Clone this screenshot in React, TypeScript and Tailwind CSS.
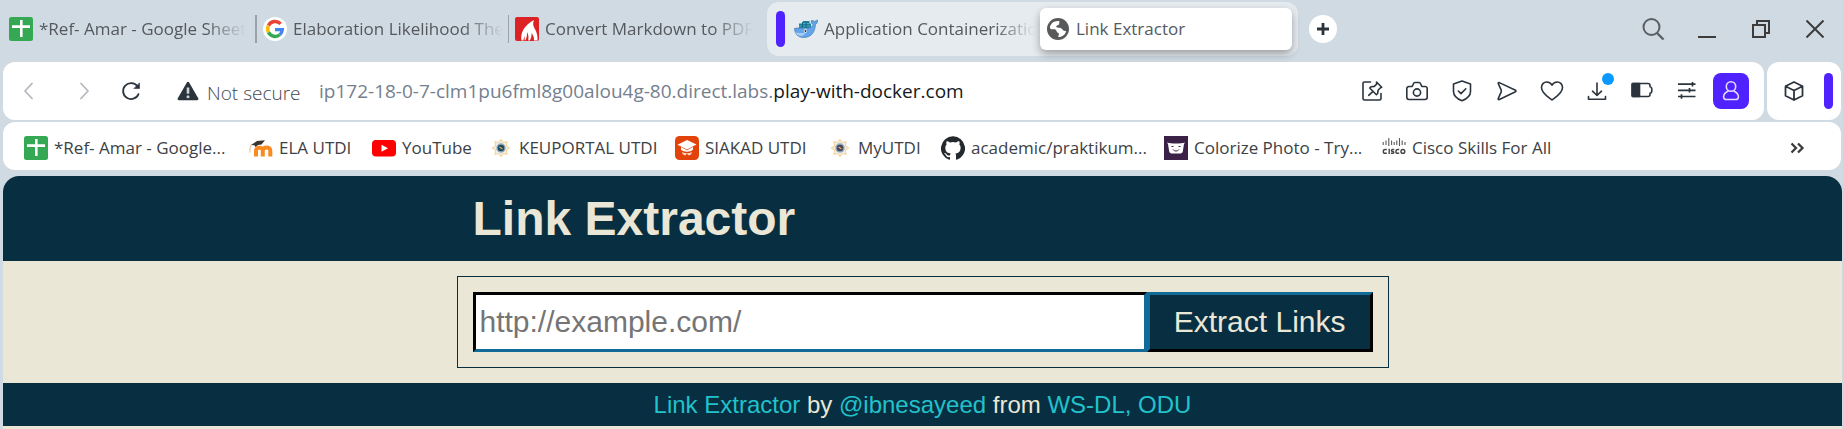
import type { ReactNode } from "react";

function SheetsIcon() {
  return (
    <svg viewBox="0 0 24 24" className="size-6 shrink-0" aria-hidden="true">
      <rect width="24" height="24" rx="2.5" fill="#34a853" />
      <path d="M12.3 3v17M3 9.6h18" stroke="#fff" strokeWidth="2.6" fill="none" />
    </svg>
  );
}

function GoogleIcon() {
  return (
    <svg viewBox="0 0 24 24" className="size-6 shrink-0" aria-hidden="true">
      <circle cx="12" cy="12" r="12" fill="#fff" />
      <g fill="none" strokeWidth="3.4">
        <path d="M17.6 6.9A7.4 7.4 0 0 0 5.5 8.6" stroke="#ea4335" />
        <path d="M5.5 8.6a7.4 7.4 0 0 0 0 6.8" stroke="#fbbc05" />
        <path d="M5.5 15.4a7.4 7.4 0 0 0 11.3 2.3" stroke="#34a853" />
        <path d="M16.8 17.7a7.4 7.4 0 0 0 2.5-5.1H12" stroke="#4285f4" />
      </g>
    </svg>
  );
}

function MarkdownPdfIcon() {
  return (
    <svg viewBox="0 0 24 24" className="size-6 shrink-0" aria-hidden="true">
      <rect width="24" height="24" rx="2" fill="#dd2226" />
      <path
        d="M6.500 23.500C5 16 9.500 8 19 3c-1.500 4-.8 6 1.200 9.500 1.600 3 2.600 6.500 2.300 11h-3.500c.2-3-.6-5-2.600-7.500.4 3-.2 5.200-1.600 7.500h-1.600c.6-3.200.2-6-1.200-8.500.2 3.500-.4 6-1.700 8.500H9.800c-.4-1.600-.3-3 .2-4.600-1 1.400-1.500 2.800-1.600 4.600z"
        fill="#fff"
      />
    </svg>
  );
}

function WhaleIcon() {
  return (
    <svg viewBox="0 0 24 24" className="size-6 shrink-0" aria-hidden="true">
      <path d="M5 11V6.500h3L9 4h6.500v2.500H17V11z" fill="#1f7f9c" />
      <path d="M8 6.500h8M5 9h11.500" stroke="#46b0c8" strokeWidth=".9" />
      <path d="M8.500 5v5M12 5v5" stroke="#0f5a73" strokeWidth=".8" />
      <path
        d="M.5 11.500c4.500-1.300 7.500.6 11 .2 3.500-.4 7-1.500 7.700-4.100-1.300-.7-2-1.800-2-4 1.500-.2 2.600.2 3.400 1.100.6-1 1.700-1.500 3.200-1.500-.1 2-1 3.500-2.400 4.400C21 14.500 18 20.500 9.500 20.500c-5.500 0-8.700-3.500-9-9z"
        fill="#62a5ea"
        stroke="#4178ae"
        strokeWidth=".7"
      />
      <path d="M1.500 15.200c3 1 6 .8 10 .8-1.500 2.200-3 3-4.500 3-2.700-.1-4.600-1.300-5.500-3.800z" fill="#a9cdf2" />
      <circle cx="11.400" cy="14" r="1.700" fill="#fff" />
      <circle cx="11.500" cy="14" r="1" fill="#1c2430" />
    </svg>
  );
}

function GlobeIcon() {
  return (
    <svg viewBox="0 0 22 22" className="size-[22px] shrink-0" aria-hidden="true">
      <circle cx="11" cy="11" r="11" fill="#58595b" />
      <path
        d="M12.500 3.200c-5-.8-9 2.200-9.600 6.300C3.500 12 5.500 11 7.500 11.200c2.500.2 1.500 2.800 3.500 3.500 1.500.6.8 1.800.2 4.200 4 .2 7.200-2.300 7.900-6-1.700.5-3.200-.2-4-1.800-1-1.600-3.200-1-4.900-1.500-1.400-.5-1.200-2 .3-2.300 2.300-.4 1.500-2.300 2-4.100z"
        fill="#fff"
      />
    </svg>
  );
}

function MoodleIcon() {
  return (
    <svg viewBox="0 0 24 24" className="size-6 shrink-0" aria-hidden="true">
      <path
        d="M7 20.500v-6c0-3.800 6.800-3.800 6.800 0v6m0-6c0-4 7.500-4 7.500 0v6"
        stroke="#f98a1f"
        strokeWidth="4"
        fill="none"
      />
      <path d="M2 9 8 5l8-.8-3.500 4.300c-2.500 0-4.500.8-6 2.500L5.500 9.300z" fill="#3a3430" />
      <path d="M2.200 9C.8 11.500.8 13.500 1 16.500" stroke="#e3b392" strokeWidth="1" fill="none" />
    </svg>
  );
}

function YouTubeIcon() {
  return (
    <svg viewBox="0 0 24 24" className="size-6 shrink-0" aria-hidden="true">
      <rect y="4" width="24" height="16.500" rx="4" fill="#f00" />
      <path d="m9.500 8.800 6.500 3.500-6.500 3.500z" fill="#fff" />
    </svg>
  );
}

function UtdiIcon({ core }: { core: string }) {
  return (
    <svg viewBox="0 0 24 24" className="size-6 shrink-0" aria-hidden="true">
      <path
        d="m12 3.500 2.200 3 3.800-.7-.6 3.900L20.500 12l-3.100 2.300.6 3.900-3.800-.7-2.200 3-2.200-3-3.800.7.600-3.900L3.500 12l3.100-2.300L6 5.800l3.800.7z"
        fill="#eceef0"
        stroke="#f6d598"
        strokeWidth="1.100"
      />
      <circle cx="12" cy="12" r="4.700" fill="#93a8b6" />
      <circle cx="12" cy="12" r="3.300" fill={core} />
      <path d="m10.500 11 3 2" stroke="#d8b25c" strokeWidth="1.200" />
    </svg>
  );
}

function SiakadIcon() {
  return (
    <svg viewBox="0 0 24 24" className="size-6 shrink-0" aria-hidden="true">
      <rect width="24" height="24" rx="4.500" fill="#e2430b" />
      <path d="m12 4 9.500 4.500L12 13.600 2.500 8.700z" fill="#fff" />
      <path d="M6 11v2.800c2.500 2.500 9.500 2.500 12 0V11l-6 3.200z" fill="#fff" />
      <path d="M7 16c.5 2.500 2 3.600 3.600 3.200L12 17.500l1.400 1.700c1.600.4 3.100-.7 3.600-3.200-3 1.700-7 1.700-10 0z" fill="#ffd9c9" />
    </svg>
  );
}

function GitHubIcon() {
  return (
    <svg viewBox="0 0 24 24" className="size-6 shrink-0" aria-hidden="true">
      <path
        fill="#24292e"
        d="M12 .3a12 12 0 0 0-3.800 23.400c.6.1.8-.3.800-.6v-2c-3.300.7-4-1.600-4-1.600-.6-1.400-1.400-1.800-1.400-1.800-1-.7.1-.7.100-.7 1.200 0 1.900 1.200 1.900 1.200 1 1.800 2.800 1.300 3.500 1 0-.8.400-1.300.7-1.600-2.700-.3-5.500-1.300-5.500-6 0-1.200.5-2.300 1.300-3.100-.2-.4-.6-1.600 0-3.200 0 0 1-.3 3.400 1.200a11.500 11.500 0 0 1 6 0c2.300-1.500 3.300-1.200 3.300-1.200.6 1.600.2 2.800 0 3.200.9.8 1.300 1.900 1.300 3.200 0 4.600-2.800 5.600-5.500 5.900.5.400.9 1 .9 2.200v3.300c0 .3.100.7.800.6A12 12 0 0 0 12 .3"
      />
    </svg>
  );
}

function ColorizeIcon() {
  return (
    <svg viewBox="0 0 24 24" className="size-6 shrink-0" aria-hidden="true">
      <rect width="24" height="24" fill="#3a2145" />
      <path d="M3 6.500c4 1.300 14 1.300 18 0l-1 1.500-1.200 7.500c-.5 1.600-1.500 2-3 2H8.200c-1.500 0-2.500-.4-3-2L4 8z" fill="#fff" />
      <path d="M7.500 10.500h2M14.500 10.500h2M9 13.500c1.500 2 4.500 2 6 0" stroke="#3a2145" strokeWidth="1" fill="none" />
    </svg>
  );
}

function CiscoIcon() {
  return (
    <svg viewBox="0 0 24 24" className="size-6 shrink-0" aria-hidden="true">
      <path
        d="M1.200 6v3M4 4.500v4.500M6.800 2v8M9.600 4.500v4.500M12.200 6v3M14.800 4.500v4.500M17.500 2v8M20.200 4.500v4.500M23 6v3"
        stroke="#5a5a5a"
        strokeWidth="1.100"
        fill="none"
      />
      <path
        d="M4.800 13.500H3.200a1.900 1.900 0 0 0 0 3.800h1.600M7.200 12.700v5.400M12.200 13.500h-1.700c-1.400 0-1.400 1.800 0 1.900 1.800.1 1.800 1.900 0 1.900H8.900M17.200 13.500h-1.400a1.900 1.900 0 0 0 0 3.800h1.400"
        stroke="#444"
        strokeWidth="1.400"
        fill="none"
      />
      <circle cx="20.900" cy="15.400" r="1.900" stroke="#444" strokeWidth="1.400" fill="none" />
    </svg>
  );
}

function Line({ children, width = 1.6 }: { children: ReactNode; width?: number }) {
  return (
    <svg
      viewBox="0 0 24 24"
      className="size-6 shrink-0"
      fill="none"
      stroke="currentColor"
      strokeWidth={width}
      strokeLinecap="round"
      strokeLinejoin="round"
      aria-hidden="true"
    >
      {children}
    </svg>
  );
}

function ToolButton({ label, children }: { label: string; children: ReactNode }) {
  return (
    <button type="button" aria-label={label} className="relative flex h-9 w-[45px] shrink-0 items-center justify-center text-[#2b343d]">
      {children}
    </button>
  );
}

function Tab({ icon, title }: { icon: ReactNode; title: string }) {
  return (
    <a href="#" className="flex h-7 min-w-0 flex-1 items-center gap-1.5 text-[17px] text-[#55595d]">
      {icon}
      <span className="overflow-hidden whitespace-nowrap [mask-image:linear-gradient(to_left,transparent,black_40px)]">{title}</span>
    </a>
  );
}

function Bookmark({ icon, title, width }: { icon: ReactNode; title: string; width: string }) {
  return (
    <a href="#" className={`flex shrink-0 items-center gap-1.5 whitespace-nowrap ${width}`}>
      {icon}
      <span>{title}</span>
    </a>
  );
}

function TabStrip() {
  return (
    <div className="flex h-[62px] items-start">
      <nav aria-label="Tabs" className="flex items-start">
        <div className="flex w-[767px] pt-[15px]">
          <div className="flex w-[257px] border-r-2 border-[#9aa1a8] pl-[9px] pr-[5px]">
            <Tab icon={<SheetsIcon />} title="*Ref- Amar - Google Sheet" />
          </div>
          <div className="flex w-[252px] border-r border-[#9aa1a8] pl-1.5 pr-[5px]">
            <Tab icon={<GoogleIcon />} title="Elaboration Likelihood The" />
          </div>
          <div className="flex w-[251px] pl-1.5 pr-1.5">
            <Tab icon={<MarkdownPdfIcon />} title="Convert Markdown to PDF" />
          </div>
        </div>
        <div className="mt-0.5 flex h-[54px] w-[531px] items-center rounded-xl bg-[#e6ebef] pl-[9px] pr-1.5">
          <span className="h-9 w-[9px] shrink-0 rounded-full bg-[#4f22ff]" />
          <div className="flex w-[255px] pl-[9px] pr-[5px]">
            <Tab icon={<WhaleIcon />} title="Application Containerizatio" />
          </div>
          <a
            href="#"
            aria-current="page"
            className="flex h-[42px] flex-1 items-center gap-[7px] rounded-md bg-white pl-[7px] text-[17px] text-[#55595d] shadow-[0_4px_8px_rgba(0,0,0,0.32)]"
          >
            <GlobeIcon />
            <span>Link Extractor</span>
          </a>
        </div>
        <button type="button" aria-label="New tab" className="ml-[11px] mt-[15px] flex size-7 items-center justify-center rounded-full bg-white text-[#2b343d]">
          <svg viewBox="0 0 12 12" className="size-3" aria-hidden="true">
            <path d="M6 0v12M0 6h12" stroke="currentColor" strokeWidth="2.800" />
          </svg>
        </button>
      </nav>
      <div className="ml-auto flex h-[58px] items-center pr-px text-[#3c3c3c]">
        <button type="button" aria-label="Search tabs" className="flex w-[54px] justify-center">
          <svg viewBox="0 0 24 24" className="size-6" fill="none" stroke="#5a5f63" strokeWidth="2" aria-hidden="true">
            <circle cx="10.500" cy="10" r="8" />
            <path d="m16 16 6.500 6.500" strokeWidth="2.400" />
          </svg>
        </button>
        <button type="button" aria-label="Minimize" className="flex w-[54px] justify-center">
          <svg viewBox="0 0 18 18" className="size-[18px]" aria-hidden="true">
            <path d="M0 17h18" stroke="currentColor" strokeWidth="2" />
          </svg>
        </button>
        <button type="button" aria-label="Restore" className="flex w-[54px] justify-center">
          <svg viewBox="0 0 18 18" className="size-[18px]" fill="none" stroke="currentColor" strokeWidth="2" aria-hidden="true">
            <path d="M1 5h12v12H1zM5 5V1h12v12h-4" />
          </svg>
        </button>
        <button type="button" aria-label="Close" className="flex w-[54px] justify-center">
          <svg viewBox="0 0 18 18" className="size-[18px]" fill="none" stroke="currentColor" strokeWidth="2" aria-hidden="true">
            <path d="m.5.5 17 17m0-17-17 17" />
          </svg>
        </button>
      </div>
    </div>
  );
}

function AddressBar() {
  return (
    <div className="flex gap-[3px] pl-[3px] pr-0.5">
      <div className="flex h-[58px] min-w-0 flex-1 items-center rounded-xl bg-white pr-[15px]">
        <div className="flex w-[174px] shrink-0 items-center">
          <button type="button" aria-label="Back" className="flex w-[51px] justify-center text-[#b4b9be]">
            <Line width={1.8}><path d="m15 4.500-7 7.500 7 7.500" /></Line>
          </button>
          <button type="button" aria-label="Forward" className="flex w-[59px] justify-center text-[#b4b9be]">
            <Line width={1.8}><path d="m9 4.500 7 7.500-7 7.500" /></Line>
          </button>
          <button type="button" aria-label="Reload" className="flex w-[36px] justify-center text-[#2b343d]">
            <Line width={1.8}>
              <path d="M19.500 15.200A8 8 0 1 1 18.500 7.200" />
              <path d="M20.500 4.200v5.300h-5.300z" fill="currentColor" strokeWidth=".6" />
            </Line>
          </button>
        </div>
        <button type="button" className="flex w-[142px] shrink-0 items-center gap-2 text-[#2b343d]">
          <svg viewBox="0 0 22 20" className="h-5 w-[22px] shrink-0" aria-hidden="true">
            <path d="M11 .8c.7 0 1 .4 1.300.9l8.900 15.600c.6 1.100 0 2-1.200 2H2c-1.200 0-1.800-.9-1.200-2L9.700 1.700c.3-.5.600-.9 1.300-.9z" fill="#2b343d" />
            <path d="M11 6.500v6.200" stroke="#cfd3d6" strokeWidth="2.600" />
            <circle cx="11" cy="15.800" r="1.500" fill="#cfd3d6" />
          </svg>
          <span className="whitespace-nowrap pt-1 text-[19px] font-light text-[#43494e]">Not secure</span>
        </button>
        <a href="#" className="min-w-0 flex-1 truncate text-[19px] text-[#75808e]">
          ip172-18-0-7-clm1pu6fml8g00alou4g-80.direct.labs.<span className="text-[#15181b]">play-with-docker.com</span>
        </a>
        <ToolButton label="Pin page">
          <Line>
            <path d="M10.500 3H4.500A1.500 1.500 0 0 0 3 4.500v15A1.500 1.500 0 0 0 4.500 21h15a1.500 1.500 0 0 0 1.500-1.500v-5" />
            <path d="m15.800 3.200 5.200 5.200-1.200.6-2.400 2.400-.4 3.300-1.300 1.200-6.700-6.700 1.300-1.200 3.300-.4L16 5.200zM12.300 12.500 8 16.500" transform="translate(.7 -.2)" />
          </Line>
        </ToolButton>
        <ToolButton label="Snapshot">
          <Line>
            <path d="M4 7.500h3.200l1.300-3A1.500 1.500 0 0 1 9.900 3.500h4.200a1.500 1.500 0 0 1 1.400 1l1.300 3H20a2.200 2.200 0 0 1 2.200 2.200v8.600a2.200 2.200 0 0 1-2.200 2.200H4a2.200 2.200 0 0 1-2.200-2.200V9.700A2.200 2.200 0 0 1 4 7.500z" />
            <circle cx="12" cy="13.500" r="3.600" />
          </Line>
        </ToolButton>
        <ToolButton label="Site security">
          <Line>
            <path d="m12 2 8.500 3v7.500c0 4-3.500 7.300-8.500 9.300-5-2-8.500-5.300-8.500-9.300V5z" />
            <path d="m8.300 12 2.700 2.600 4.800-4.800" />
          </Line>
        </ToolButton>
        <ToolButton label="My Flow">
          <Line>
            <path d="M4.300 3.600 20 11q2 1 0 2L4.300 20.500q-1.500.4-1-1.200l2.800-6.200q.5-1.100 0-2.200L3.300 4.700q-.5-1.500 1-1.100z" />
          </Line>
        </ToolButton>
        <ToolButton label="Add to favourites">
          <Line>
            <path d="M12 21C9 18.500 1.500 14.500 1.500 8.500c0-3 2.200-5.500 5.200-5.500 2.400 0 4.300 1.300 5.300 3.200C13 4.300 14.900 3 17.300 3c3 0 5.200 2.500 5.200 5.500 0 6-7.500 10-10.500 12.500z" />
          </Line>
        </ToolButton>
        <ToolButton label="Downloads">
          <Line>
            <path d="M12 4v12.500M7.500 12.200l4.500 4.300 4.500-4.300M3.500 17.500v2.800h17v-2.800" />
          </Line>
          <span className="absolute right-[5px] top-0 size-3 rounded-full bg-[#0a99ff]" />
        </ToolButton>
        <ToolButton label="Battery saver">
          <Line>
            <path d="M3 4.500h15a2 2 0 0 1 2 2v1.300a2 2 0 0 1 1.800 2v2.400a2 2 0 0 1-1.800 2v1.300a2 2 0 0 1-2 2H3a1 1 0 0 1-1-1v-11a1 1 0 0 1 1-1z" />
            <path d="M2.500 4.500h7v13h-7z" fill="currentColor" />
          </Line>
        </ToolButton>
        <ToolButton label="Easy setup">
          <Line width={1.7}>
            <path d="M3 5.200h17.500M3 11.300h17.500M3 17.500h17.500M17.500 3v4.500M14.500 9v4.500M6.500 15.300v4.500" strokeLinecap="butt" />
          </Line>
        </ToolButton>
        <button type="button" aria-label="Profile" className="ml-1 flex size-9 shrink-0 items-center justify-center rounded-lg bg-[#4f22ff] text-[#e2dcff]">
          <Line>
            <circle cx="12" cy="7.500" r="4.700" />
            <path d="M8.800 12.200C6.300 13.500 4.800 15 4.600 17.500c-.1 2.200 1 3 2.900 3h9c1.900 0 3-.8 2.900-3-.2-2.500-1.700-4-4.200-5.300" />
          </Line>
        </button>
      </div>
      <div className="flex h-[58px] w-[74px] items-center rounded-xl bg-white pl-[15px]">
        <button type="button" aria-label="Extensions" className="text-[#2b343d]">
          <Line width={1.8}>
            <path d="m12 3 8.500 4.200v9.600L12 21l-8.500-4.200V7.200zM3.500 7.200 12 11.500l8.500-4.300M12 11.500V21" />
          </Line>
        </button>
        <span className="ml-[18px] h-9 w-[9px] rounded-full bg-[#4f22ff]" />
      </div>
    </div>
  );
}

function BookmarksBar() {
  return (
    <nav aria-label="Bookmarks" className="ml-[3px] mr-0.5 mt-0.5 flex h-12 items-center rounded-xl bg-white pl-[21px] pr-[30px] pt-1 text-[17px] text-[#3c4146]">
      <Bookmark width="w-[225px]" icon={<SheetsIcon />} title="*Ref- Amar - Google..." />
      <Bookmark width="w-[123px]" icon={<MoodleIcon />} title="ELA UTDI" />
      <Bookmark width="w-[117px]" icon={<YouTubeIcon />} title="YouTube" />
      <Bookmark width="w-[186px]" icon={<UtdiIcon core="#1d4a63" />} title="KEUPORTAL UTDI" />
      <Bookmark width="w-[153px]" icon={<SiakadIcon />} title="SIAKAD UTDI" />
      <Bookmark width="w-[113px]" icon={<UtdiIcon core="#4b4660" />} title="MyUTDI" />
      <Bookmark width="w-[223px]" icon={<GitHubIcon />} title="academic/praktikum..." />
      <Bookmark width="w-[218px]" icon={<ColorizeIcon />} title="Colorize Photo - Try..." />
      <Bookmark width="w-[180px]" icon={<CiscoIcon />} title="Cisco Skills For All" />
      <button type="button" aria-label="More bookmarks" className="ml-auto text-[#3c3c3c]">
        <svg viewBox="0 0 28 24" className="h-6 w-7" fill="none" stroke="currentColor" strokeWidth="2.300" aria-hidden="true">
          <path d="m8.500 7.500 4.500 4.500-4.500 4.500M15 7.500l4.500 4.500-4.500 4.500" />
        </svg>
      </button>
    </nav>
  );
}

function LinkExtractorPage() {
  return (
    <div className="ml-[3px] mr-px mt-1.5 flex flex-1 flex-col overflow-hidden rounded-t-2xl bg-[#eae7d6] font-['Liberation_Sans',Arial,sans-serif] text-[#eae7d6]">
      <header className="bg-[#082e41] py-[15px]">
        <h1 className="mx-auto max-w-[900px] text-[48px] font-bold leading-[55px]">Link Extractor</h1>
      </header>
      <main className="py-[15px]">
        <form
          className="mx-auto flex max-w-[932px] border border-[#082e41] p-[15px] text-[30px] leading-[34px]"
          onSubmit={(event) => event.preventDefault()}
        >
          <input
            type="url"
            aria-label="Page URL"
            placeholder="http://example.com/"
            className="h-[60px] min-w-0 flex-1 border-[3px] border-b-[#126a98] border-l-black border-r-[#126a98] border-t-black bg-white px-1 text-black outline-none placeholder:text-[#757575]"
          />
          <button
            type="submit"
            className="h-[60px] shrink-0 border-[3px] border-b-black border-l-[#126a98] border-r-black border-t-[#126a98] bg-[#082e41] px-6"
          >
            Extract Links
          </button>
        </form>
      </main>
      <footer className="bg-[#082e41] py-2 text-center text-[24px] leading-[27px]">
        <a href="#" className="text-[#21c2cb]">Link Extractor</a> by <a href="#" className="text-[#21c2cb]">@ibnesayeed</a> from{" "}
        <a href="#" className="text-[#21c2cb]">WS-DL, ODU</a>
      </footer>
    </div>
  );
}

export default function App() {
  return (
    <div className="flex min-h-screen flex-col bg-[#d0dae3] font-['Open_Sans','Noto_Sans',sans-serif]">
      <TabStrip />
      <AddressBar />
      <BookmarksBar />
      <LinkExtractorPage />
    </div>
  );
}
